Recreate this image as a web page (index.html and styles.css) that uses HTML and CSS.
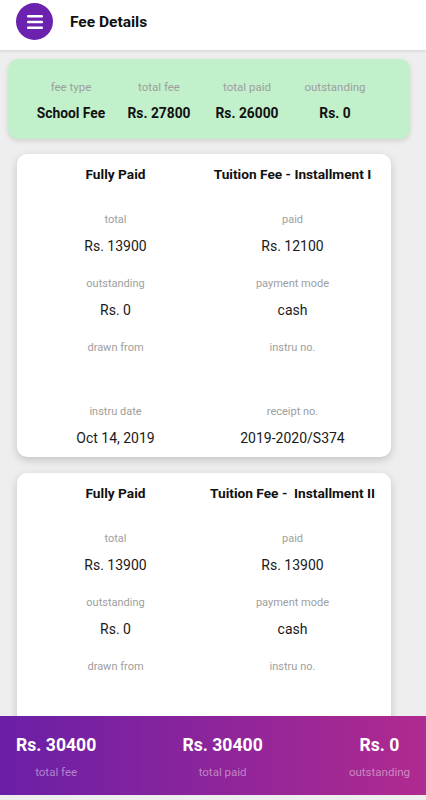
FILE: index.html
```html
<!DOCTYPE html>
<html lang="en">

<head>
    <meta charset="UTF-8">
    <meta name="viewport" content="width=device-width, initial-scale=1.0">
    <title>Fee Details</title>
    <link rel="stylesheet" href="styles.css">
</head>

<body>
    <header class="top-bar">
        <button class="menu-btn" aria-label="menu">
            <svg width="16" height="14" viewBox="0 0 16 14">
                <rect x="0" y="0" width="16" height="2.6" rx="1" fill="#fff" />
                <rect x="0" y="5.7" width="16" height="2.6" rx="1" fill="#fff" />
                <rect x="0" y="11.4" width="16" height="2.6" rx="1" fill="#fff" />
            </svg>
        </button>
        <h1>Fee Details</h1>
    </header>

    <div class="summary">
        <div class="summary-col">
            <span class="label">fee type</span>
            <span class="summary-value">School Fee</span>
        </div>
        <div class="summary-col">
            <span class="label">total fee</span>
            <span class="summary-value">Rs. 27800</span>
        </div>
        <div class="summary-col">
            <span class="label">total paid</span>
            <span class="summary-value">Rs. 26000</span>
        </div>
        <div class="summary-col">
            <span class="label">outstanding</span>
            <span class="summary-value">Rs. 0</span>
        </div>
    </div>

    <div class="installment">
        <div class="inst-head">
            <span>Fully Paid</span>
            <span>Tuition Fee - Installment I</span>
        </div>
        <div class="fields">
            <div class="field"><span class="label">total</span><span class="value">Rs. 13900</span></div>
            <div class="field"><span class="label">paid</span><span class="value">Rs. 12100</span></div>
            <div class="field"><span class="label">outstanding</span><span class="value">Rs. 0</span></div>
            <div class="field"><span class="label">payment mode</span><span class="value">cash</span></div>
            <div class="field"><span class="label">drawn from</span><span class="value"></span></div>
            <div class="field"><span class="label">instru no.</span><span class="value"></span></div>
            <div class="field"><span class="label">instru date</span><span class="value">Oct 14, 2019</span></div>
            <div class="field"><span class="label">receipt no.</span><span class="value">2019-2020/S374</span></div>
        </div>
    </div>

    <div class="installment">
        <div class="inst-head">
            <span>Fully Paid</span>
            <span>Tuition Fee -&nbsp; Installment II</span>
        </div>
        <div class="fields">
            <div class="field"><span class="label">total</span><span class="value">Rs. 13900</span></div>
            <div class="field"><span class="label">paid</span><span class="value">Rs. 13900</span></div>
            <div class="field"><span class="label">outstanding</span><span class="value">Rs. 0</span></div>
            <div class="field"><span class="label">payment mode</span><span class="value">cash</span></div>
            <div class="field"><span class="label">drawn from</span><span class="value"></span></div>
            <div class="field"><span class="label">instru no.</span><span class="value"></span></div>
            <div class="field"><span class="label">instru date</span><span class="value">Jan 10, 2020</span></div>
            <div class="field"><span class="label">receipt no.</span><span class="value">2019-2020/S512</span></div>
        </div>
    </div>

    <footer class="totals">
        <div class="total-item">
            <span class="total-value">Rs. 30400</span>
            <span class="total-label">total fee</span>
        </div>
        <div class="total-item">
            <span class="total-value">Rs. 30400</span>
            <span class="total-label">total paid</span>
        </div>
        <div class="total-item">
            <span class="total-value">Rs. 0</span>
            <span class="total-label">outstanding</span>
        </div>
    </footer>
</body>

</html>
```

FILE: styles.css
```css
body {
    margin: 0;
    font-family: Roboto, "Liberation Sans", sans-serif;
    background-color: #eeeeee;
    color: #212121;
    padding-bottom: 120px;
}

.top-bar {
    height: 50px;
    box-sizing: border-box;
    padding: 3px 16px 10px;
    display: flex;
    align-items: center;
    gap: 17px;
    background-color: #fff;
    box-shadow: 0 1px 3px rgba(0, 0, 0, 0.12);
}

.menu-btn {
    width: 37px;
    height: 37px;
    border: none;
    border-radius: 50%;
    background-color: #6b22ae;
    display: flex;
    align-items: center;
    justify-content: center;
    padding: 0;
}

.top-bar h1 {
    margin: 0;
    font-size: 15.5px;
    font-weight: 700;
    color: #111;
}

.label {
    display: block;
    font-size: 11px;
    line-height: 16px;
    color: #9e9e9e;
}

.summary {
    margin: 9px 16px 0 8px;
    padding: 20px 31px 16px 19px;
    display: flex;
    background-color: #c1f0cb;
    border-radius: 10px;
    box-shadow: 0 2px 5px rgba(0, 0, 0, 0.12);
}

.summary-col {
    flex: 0 0 88px;
    text-align: center;
}

.summary .label {
    font-size: 11.5px;
}

.summary-value {
    display: block;
    margin-top: 8px;
    font-size: 13.8px;
    line-height: 20px;
    font-weight: 700;
    color: #111;
}

.installment {
    margin: 15px 35px 0 17px;
    padding: 10px 10px 9px;
    background-color: #fff;
    border-radius: 10px;
    box-shadow: 0 3px 8px rgba(0, 0, 0, 0.18);
}

.installment + .installment {
    margin-top: 16px;
}

.inst-head,
.fields {
    display: grid;
    grid-template-columns: 1fr 1fr;
    text-align: center;
}

.inst-head {
    font-size: 13.7px;
    font-weight: 700;
    line-height: 20px;
    color: #111;
}

.fields {
    margin-top: 28px;
    row-gap: 20px;
}

.value {
    display: block;
    margin-top: 8px;
    height: 20px;
    font-size: 14px;
    line-height: 20px;
    color: #1a1a1a;
}

.totals {
    position: fixed;
    left: 0;
    right: 0;
    bottom: 5px;
    height: 79px;
    box-sizing: border-box;
    padding: 17px 16px 0;
    display: flex;
    justify-content: space-between;
    background: linear-gradient(to right, #6a1fa7, #b02a8f);
}

.total-item {
    display: flex;
    flex-direction: column;
    align-items: center;
}

.total-value {
    font-size: 17.6px;
    line-height: 24px;
    font-weight: 700;
    color: #fff;
}

.total-label {
    margin-top: 7px;
    font-size: 11.5px;
    line-height: 16px;
    color: rgba(255, 255, 255, 0.45);
}
```
